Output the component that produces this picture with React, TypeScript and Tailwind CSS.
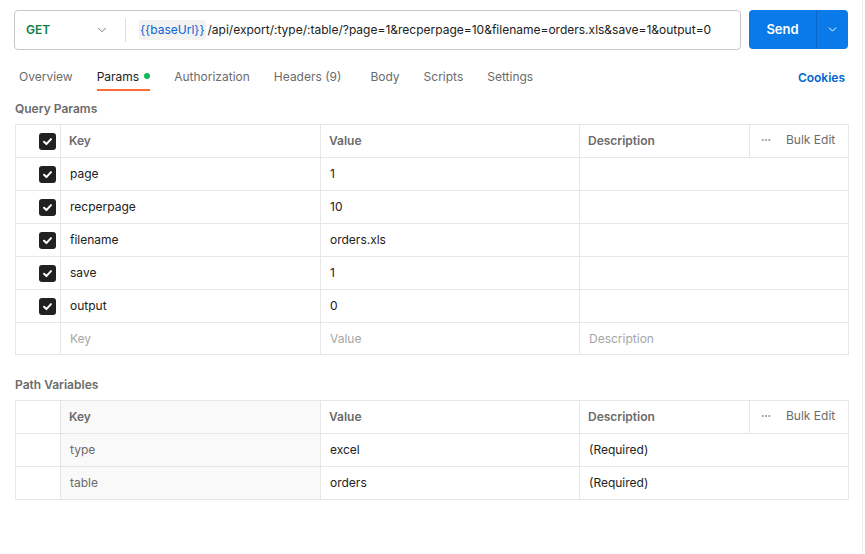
import { ChevronDown } from "lucide-react";

const font = { fontFamily: "Inter, 'Noto Sans', sans-serif" };

type Row = { key: string; value: string; desc?: string };

const queryRows: Row[] = [
    { key: "page", value: "1" },
    { key: "recperpage", value: "10" },
    { key: "filename", value: "orders.xls" },
    { key: "save", value: "1" },
    { key: "output", value: "0" },
];

const pathRows: Row[] = [
    { key: "type", value: "excel", desc: "(Required)" },
    { key: "table", value: "orders", desc: "(Required)" },
];

function Check() {
    return (
        <div className="w-[17px] h-[17px] rounded-[3px] bg-[#212121] flex items-center justify-center">
            <svg width="11" height="11" viewBox="0 0 12 12" fill="none">
                <path d="M2.2 6.3 L4.8 8.8 L9.8 3.4" stroke="white" strokeWidth="2.2" strokeLinecap="round" strokeLinejoin="round" />
            </svg>
        </div>
    );
}

function Dots() {
    return (
        <svg width="10" height="4" viewBox="0 0 10 4" className="mr-[15px]">
            <circle cx="1.7" cy="2" r="1.1" fill="#9a9a9a" />
            <circle cx="5" cy="2" r="1.1" fill="#9a9a9a" />
            <circle cx="8.3" cy="2" r="1.1" fill="#9a9a9a" />
        </svg>
    );
}

function HeaderRow({ checkbox, shadeKey }: { checkbox: boolean; shadeKey: boolean }) {
    return (
        <div className="flex h-[32px] text-[12px] font-semibold text-[#6b6b6b]">
            <div className="w-[44px] flex items-center justify-center pl-[18px]">{checkbox && <Check />}</div>
            <div className={`w-[260px] border-l border-[#e6e6e6] flex items-center px-[8px] ${shadeKey ? "bg-[#f9f9f9]" : ""}`}>Key</div>
            <div className="w-[259px] border-l border-[#e6e6e6] flex items-center px-[8px]">Value</div>
            <div className="w-[170px] border-l border-[#e6e6e6] flex items-center px-[8px]">Description</div>
            <div className="flex-1 border-l border-[#e6e6e6] flex items-center pl-[11px] pb-[2px] font-normal text-[#6b6b6b]">
                <Dots />
                Bulk Edit
            </div>
        </div>
    );
}

function BodyRow({ row, checkbox, shadeKey }: { row: Row; checkbox: boolean; shadeKey: boolean }) {
    return (
        <div className="flex h-[33px] border-t border-[#e6e6e6] text-[12px] text-[#212121]">
            <div className="w-[44px] flex items-center justify-center pl-[18px]">{checkbox && <Check />}</div>
            <div className={`w-[260px] border-l border-[#e6e6e6] flex items-center px-[9px] ${shadeKey ? "bg-[#f9f9f9] text-[#6b6b6b]" : ""}`}>{row.key}</div>
            <div className="w-[259px] border-l border-[#e6e6e6] flex items-center px-[9px]">{row.value}</div>
            <div className="flex-1 border-l border-[#e6e6e6] flex items-center px-[9px]">{row.desc}</div>
        </div>
    );
}

export default function App() {
    const tabs = ["Overview", "Params", "Authorization", "Headers (9)", "Body", "Scripts", "Settings"];

    return (
        <div className="w-[865px] h-[554px] bg-white" style={font}>
            <div className="w-[863px] h-[554px] border-r border-[#ececec] pl-[14px] pr-[14px] pt-[10px]">
                {/* url bar */}
                <div className="flex gap-[8px] h-[40px] w-[834px]">
                    <div className="w-[727px] border border-[#c8c8c8] rounded-[4px] flex items-center overflow-hidden">
                        <div className="w-[110px] shrink-0 flex items-center justify-between pl-[11px] pr-[16px] text-[12px] font-semibold text-[#0b7f47]">
                            GET
                            <ChevronDown size={14} strokeWidth={1.6} className="text-[#6b6b6b]" />
                        </div>
                        <div className="w-px h-[24px] shrink-0 bg-[#e0e0e0]" />
                        <div className="flex items-center pl-[13px] text-[12px] text-[#212121] whitespace-nowrap">
                            <span className="bg-[#f2f2f2] text-[#0b63d4] rounded-[3px] px-[1px] py-[1px] mr-[2px]">{"{{baseUrl}}"}</span>
                            /api/export/:type/:table/?page=1&recperpage=10&filename=orders.xls&save=1&output=0
                        </div>
                    </div>
                    <div className="w-[99px] h-[39px] rounded-[4px] bg-[#0a7ae9] flex text-white">
                        <div className="w-[67px] flex items-center justify-center text-[13px] font-semibold">Send</div>
                        <div className="w-px bg-[#0766c7]" />
                        <div className="flex-1 flex items-center justify-center">
                            <ChevronDown size={13} strokeWidth={1.8} />
                        </div>
                    </div>
                </div>

                {/* tabs */}
                <div className="flex items-end justify-between h-[41px] w-[834px]">
                    <div className="flex gap-[24px] pl-[5px] text-[12px] text-[#6b6b6b]">
                        {tabs.map((t) => (
                            <div key={t} className={`h-[23px] flex items-start gap-[5px] ${t === "Params" ? "text-[#212121] border-b-2 border-[#ff6c37]" : ""} ${t === "Body" ? "ml-[5px]" : ""}`}>
                                {t}
                                {t === "Params" && <span className="w-[6px] h-[6px] rounded-full bg-[#0cbb52] mt-[5px]" />}
                            </div>
                        ))}
                    </div>
                    <div className="text-[12px] font-semibold text-[#0265d2] h-[22px] pr-[3px]">Cookies</div>
                </div>

                {/* query params */}
                <div className="text-[12px] font-semibold text-[#6b6b6b] mt-[9px] pl-[1px] h-[17px] leading-[17px]">Query Params</div>
                <div className="mt-[7px] ml-[1px] w-[834px] border border-[#e6e6e6]">
                    <HeaderRow checkbox shadeKey={false} />
                    {queryRows.map((r) => (
                        <BodyRow key={r.key} row={r} checkbox shadeKey={false} />
                    ))}
                    <div className="flex h-[32px] border-t border-[#e6e6e6] text-[12px] text-[#a6a6a6]">
                        <div className="w-[44px]" />
                        <div className="w-[260px] border-l border-[#e6e6e6] flex items-center px-[9px]">Key</div>
                        <div className="w-[259px] border-l border-[#e6e6e6] flex items-center px-[9px]">Value</div>
                        <div className="flex-1 border-l border-[#e6e6e6] flex items-center px-[9px]">Description</div>
                    </div>
                </div>

                {/* path variables */}
                <div className="text-[12px] font-semibold text-[#6b6b6b] mt-[21px] pl-[1px] h-[17px] leading-[17px]">Path Variables</div>
                <div className="mt-[7px] ml-[1px] w-[834px] border border-[#e6e6e6]">
                    <HeaderRow checkbox={false} shadeKey />
                    {pathRows.map((r) => (
                        <BodyRow key={r.key} row={r} checkbox={false} shadeKey />
                    ))}
                </div>
            </div>
        </div>
    );
}
